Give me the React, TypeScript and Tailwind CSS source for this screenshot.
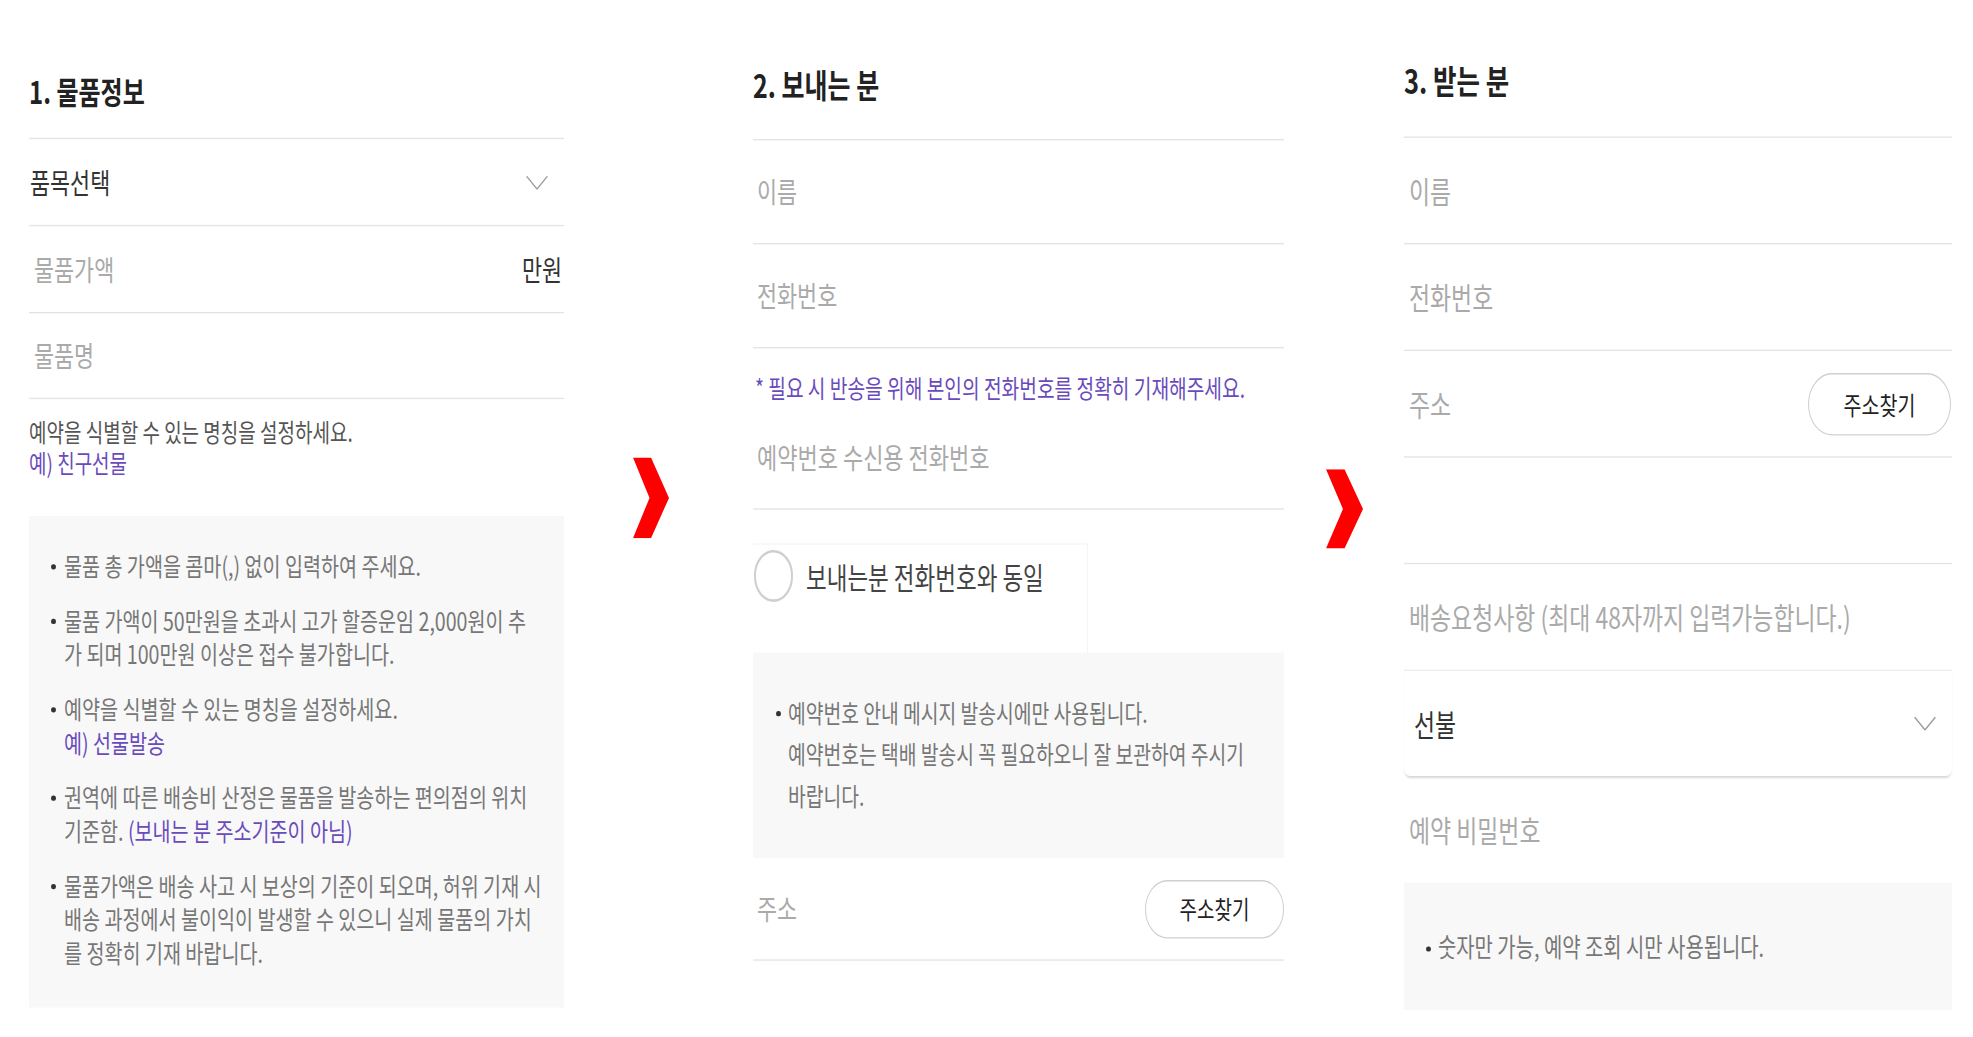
import React from 'react'

// the reference is stretched vertically (~1.3x), so the page is laid out
// at its natural height and scaled once on the wrapper

function RedArrow({ className }: { className: string }) {
  return (
    <svg viewBox="0 0 36 80" preserveAspectRatio="none" className={className}>
      <polygon points="0,0 18,0 36,40 18,80 0,80 16.5,40" fill="#ff0000" />
    </svg>
  )
}

function DropChevron() {
  return (
    <svg viewBox="0 0 22 11" preserveAspectRatio="none" className="w-[22px] h-[11px]">
      <polyline points="0.6,0.6 11,10.4 21.4,0.6" fill="none" stroke="#9a9a9a" strokeWidth="1.2" />
    </svg>
  )
}

function Dot({ className }: { className: string }) {
  return <span className={`shrink-0 w-[5px] h-[4px] rounded-full bg-[#333] ${className}`} />
}

function ItemInfo() {
  const notes: React.ReactNode[] = [
    <>물품 총 가액을 콤마(,) 없이 입력하여 주세요.</>,
    <>
      물품 가액이 50만원을 초과시 고가 할증운임 2,000원이 추<br />가 되며 100만원 이상은 접수 불가합니다.
    </>,
    <>
      예약을 식별할 수 있는 명칭을 설정하세요.<br />
      <span className="text-[#6a4bbd]">예) 선물발송</span>
    </>,
    <>
      권역에 따른 배송비 산정은 물품을 발송하는 편의점의 위치<br />기준함.{' '}
      <span className="text-[#6a4bbd]">(보내는 분 주소기준이 아님)</span>
    </>,
    <>
      물품가액은 배송 사고 시 보상의 기준이 되오며, 허위 기재 시<br />배송 과정에서 불이익이 발생할 수 있으니 실제 물품의 가치<br />를 정확히 기재 바랍니다.
    </>,
  ]

  return (
    <section className="w-[535px] shrink-0 pt-[55px]">
      <h2 className="text-[24px] leading-[30px] font-bold text-[#222] mb-[21px]">1. 물품정보</h2>

      <div className="h-[67px] border-t border-[#e3e3e3] flex items-center justify-between pl-[1px] pr-[16px]">
        <span className="text-[21.8px] text-[#333]">품목선택</span>
        <DropChevron />
      </div>
      <div className="h-[67px] border-t border-[#e3e3e3] flex items-center justify-between pl-[5px] pr-[2px]">
        <span className="text-[21.8px] text-[#aaa]">물품가액</span>
        <span className="text-[21.8px] text-[#333]">만원</span>
      </div>
      <div className="h-[67px] border-y border-[#e3e3e3] flex items-center pl-[5px]">
        <span className="text-[21.8px] text-[#aaa]">물품명</span>
      </div>

      <p className="mt-[13px] text-[19px] leading-[24px] text-[#555]">
        예약을 식별할 수 있는 명칭을 설정하세요.
        <br />
        <span className="text-[#6a4bbd]">예) 친구선물</span>
      </p>

      <ul className="mt-[29px] bg-[#f8f8f8] pt-[25px] pb-[29px] pl-[22px] flex flex-col gap-[16px]">
        {notes.map((note, i) => (
          <li key={i} className="flex items-start gap-[8px] text-[19.6px] leading-[26px] text-[#777] whitespace-nowrap">
            <Dot className="mt-[12px]" />
            <span>{note}</span>
          </li>
        ))}
      </ul>
    </section>
  )
}

function Sender() {
  return (
    <section className="w-[531px] shrink-0 pt-[48px]">
      <h2 className="text-[25px] leading-[32px] font-bold text-[#222] mb-[27px]">2. 보내는 분</h2>

      <div className="h-[80px] border-t border-[#e3e3e3] flex items-center pl-[4px]">
        <span className="text-[21.8px] text-[#aaa]">이름</span>
      </div>
      <div className="h-[80px] border-t border-[#e3e3e3] flex items-center pl-[4px]">
        <span className="text-[21.8px] text-[#aaa]">전화번호</span>
      </div>
      <div className="border-t border-b border-[#e3e3e3]">
        <p className="mt-[17px] pl-[2px] text-[19.2px] leading-[26px] text-[#6a4bbd]">
          * 필요 시 반송을 위해 본인의 전화번호를 정확히 기재해주세요.
        </p>
        <div className="h-[80px] flex items-center pl-[4px]">
          <span className="text-[22px] text-[#aaa]">예약번호 수신용 전화번호</span>
        </div>
      </div>

      <div className="mt-[26px] w-[335px] h-[84px] border-t border-r border-[#f5f5f5] flex items-start gap-[13px] pt-[4px] pl-[1px]">
        <span className="w-[39px] h-[40px] rounded-full border-2 border-[#cfcfcf] bg-white" />
        <span className="text-[22.5px] leading-[40px] text-[#444]">보내는분 전화번호와 동일</span>
      </div>

      <div className="bg-[#f8f8f8] pt-[30px] pb-[32px] pl-[23px] flex items-start gap-[7px] text-[19.3px] leading-[32px] text-[#777] whitespace-nowrap">
        <Dot className="mt-[15px]" />
        <p>
          예약번호 안내 메시지 발송시에만 사용됩니다.
          <br />
          예약번호는 택배 발송시 꼭 필요하오니 잘 보관하여 주시기
          <br />
          바랍니다.
        </p>
      </div>

      <div className="h-[79px] border-b border-[#e3e3e3] flex items-center justify-between pl-[4px]">
        <span className="text-[21.8px] text-[#aaa]">주소</span>
        <button className="w-[139px] h-[45px] rounded-full border border-[#cfcfcf] bg-white text-[19px] text-[#222]">
          주소찾기
        </button>
      </div>
    </section>
  )
}

function Receiver() {
  return (
    <section className="w-[548px] shrink-0 pt-[45px]">
      <h2 className="text-[25.5px] leading-[32px] font-bold text-[#222] mb-[28px]">3. 받는 분</h2>

      <div className="h-[82px] border-t border-[#e3e3e3] flex items-center pl-[5px]">
        <span className="text-[22.9px] text-[#aaa]">이름</span>
      </div>
      <div className="h-[82px] border-t border-[#e3e3e3] flex items-center pl-[5px]">
        <span className="text-[22.9px] text-[#aaa]">전화번호</span>
      </div>
      <div className="h-[82px] border-t border-[#e3e3e3] flex items-center justify-between pl-[5px] pr-[1px]">
        <span className="text-[22.9px] text-[#aaa]">주소</span>
        <button className="w-[143px] h-[48px] rounded-full border border-[#cfcfcf] bg-white text-[19.5px] text-[#222]">
          주소찾기
        </button>
      </div>
      <div className="h-[82px] border-t border-[#e3e3e3]" />
      <div className="h-[82px] border-t border-[#e3e3e3] flex items-center pl-[5px]">
        <span className="text-[22.9px] text-[#aaa]">배송요청사항 (최대 48자까지 입력가능합니다.)</span>
      </div>
      <div className="h-[82px] border-t border-[#e3e3e3] rounded-b-md shadow-[0_2px_2px_-1px_rgba(0,0,0,0.16)] flex items-center justify-between pl-[10px] pr-[16px]">
        <span className="text-[22.9px] text-[#333]">선불</span>
        <DropChevron />
      </div>
      <div className="h-[82px] flex items-center pl-[5px]">
        <span className="text-[22.9px] text-[#aaa]">예약 비밀번호</span>
      </div>

      <div className="h-[98px] bg-[#f8f8f8] flex items-center gap-[7px] pl-[22px] text-[19.9px] text-[#777]">
        <Dot className="mt-[3px]" />
        <span>숫자만 가능, 예약 조회 시만 사용됩니다.</span>
      </div>
    </section>
  )
}

export default function App() {
  return (
    <div className="w-full h-[1037px] overflow-hidden bg-white">
      <div className="origin-top scale-y-[1.3] flex items-start pl-[29px] font-['Noto_Sans_CJK_KR','Noto_Sans',sans-serif]">
        <ItemInfo />
        <RedArrow className="shrink-0 ml-[69px] mt-[352px] w-[36px] h-[62px]" />
        <div className="ml-[84px]">
          <Sender />
        </div>
        <RedArrow className="shrink-0 ml-[42px] mt-[361px] w-[37px] h-[61px]" />
        <div className="ml-[41px]">
          <Receiver />
        </div>
      </div>
    </div>
  )
}
